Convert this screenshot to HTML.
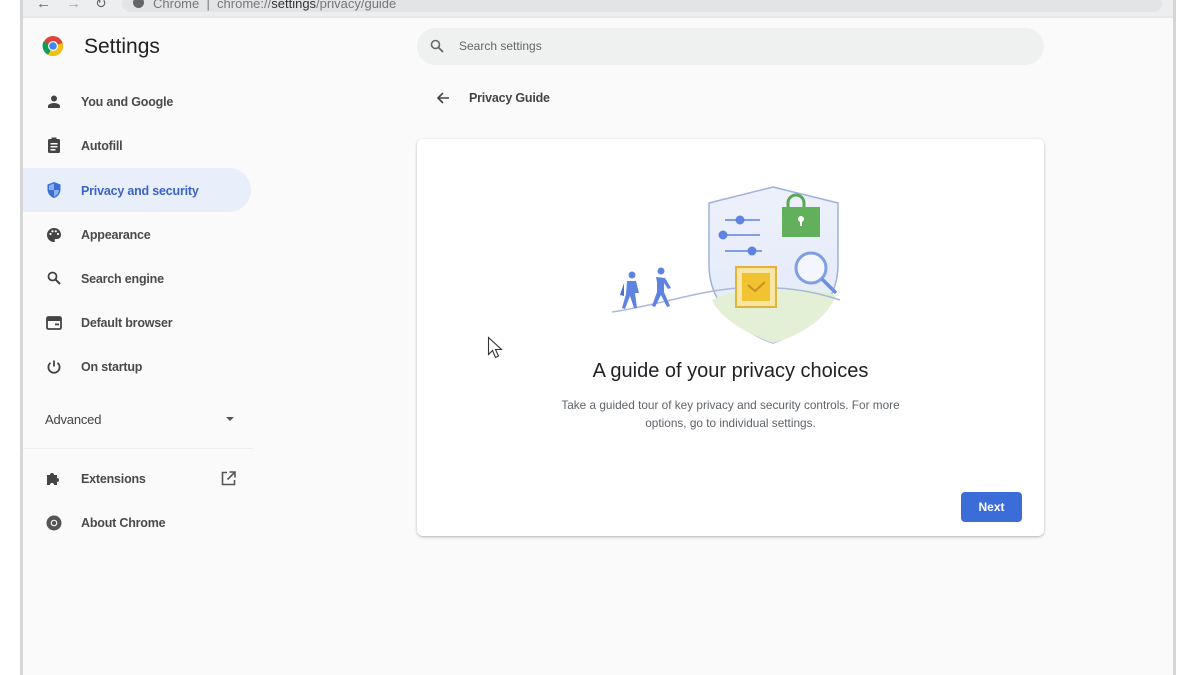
<!DOCTYPE html>
<html><head><meta charset="utf-8"><style>
*{margin:0;padding:0;box-sizing:border-box}
body{width:1200px;height:675px;background:#fff;position:relative;overflow:hidden;font-family:"Liberation Sans",Arial,sans-serif;color:#3c4043}
.frame{position:absolute;left:20px;top:0;width:1156px;height:675px;background:#fafafa;border-left:3px solid #d6d6d6;border-right:3px solid #d6d6d6}
.top{position:absolute;left:23px;top:0;width:1150px;height:18px;background:#eceeef;border-bottom:2px solid #e6e6e6}
.a{position:absolute;white-space:nowrap}
.nav{font-size:12.5px;color:#4a4a4a;font-weight:bold;letter-spacing:-0.2px}
.ic{position:absolute}
</style></head><body>
<div class="frame"></div>
<div class="top"></div>
<div class="a" style="left:36px;top:-5px;font-size:15px;color:#666">←</div>
<div class="a" style="left:66px;top:-5px;font-size:15px;color:#aaa">→</div>
<div class="a" style="left:95px;top:-5px;font-size:14px;color:#666">↻</div>
<div class="a" style="left:122px;top:-4px;width:1040px;height:16px;background:#e2e4e5;border-radius:8px"></div>
<div class="a" style="left:133px;top:-3px;width:11px;height:11px;border-radius:50%;background:#666"></div>
<div class="a" style="left:153px;top:-4px;font-size:13px;color:#777">Chrome&nbsp; | &nbsp;chrome://<b style="color:#333;font-weight:normal">settings</b>/privacy/guide</div>

<svg class="ic" style="left:42px;top:35px" width="22" height="22" viewBox="0 0 22 22"><circle cx="11" cy="11" r="10" fill="#db4437"/><path d="M11 11 L20.5 8 A10 10 0 0 1 6 19.7Z" fill="#f4c20d"/><path d="M11 11 L6 19.7 A10 10 0 0 1 1.5 6.5Z" fill="#0f9d58"/><circle cx="11" cy="11" r="5" fill="#fff"/><circle cx="11" cy="11" r="3.8" fill="#4285f4"/></svg>
<div class="a" style="left:84px;top:35px;font-size:21px;color:#202124">Settings</div>

<div class="a" style="left:417px;top:28px;width:627px;height:37px;background:#eff1f1;border-radius:19px"></div>
<svg class="ic" style="left:430px;top:39px" width="14" height="14" viewBox="0 0 14 14"><circle cx="5.5" cy="5.5" r="4" fill="none" stroke="#666" stroke-width="1.6"/><path d="M8.5 8.5L13 13" stroke="#666" stroke-width="1.8"/></svg>
<div class="a" style="left:459px;top:39px;font-size:12px;color:#666">Search settings</div>

<div class="a" style="left:23px;top:168px;width:228px;height:44px;background:#e8eefa;border-radius:0 22px 22px 0"></div>

<svg class="ic" style="left:46px;top:94px" width="16" height="16" viewBox="0 0 16 16"><circle cx="8" cy="4.5" r="3" fill="#444"/><path d="M2 14v-2c0-2 4-3 6-3s6 1 6 3v2z" fill="#444"/></svg>
<div class="a nav" style="left:81px;top:95px">You and Google</div>
<svg class="ic" style="left:47px;top:137px" width="14" height="17" viewBox="0 0 14 17"><rect x="1" y="2" width="12" height="14" rx="1.5" fill="#444"/><rect x="4.5" y="0.5" width="5" height="3" fill="#444"/><rect x="3.5" y="6" width="7" height="1.5" fill="#fff"/><rect x="3.5" y="9" width="7" height="1.5" fill="#fff"/><rect x="3.5" y="12" width="5" height="1.5" fill="#fff"/></svg>
<div class="a nav" style="left:81px;top:139px">Autofill</div>
<svg class="ic" style="left:46px;top:181px" width="16" height="18" viewBox="0 0 16 18"><path d="M8 1L1.5 3.5v5C1.5 12.5 4.5 16 8 17c3.5-1 6.5-4.5 6.5-8.5v-5z" fill="#3b6fd8"/><path d="M8 2.5v6.5H3V4.5zM8 9h5c-.3 3-2.4 5.6-5 6.5z" fill="#8fb0ee"/></svg>
<div class="a nav" style="left:81px;top:184px;color:#3b63c9">Privacy and security</div>
<svg class="ic" style="left:46px;top:227px" width="16" height="16" viewBox="0 0 16 16"><path d="M8 1a7 7 0 0 0 0 14c1 0 1.3-.8.8-1.5-.5-.7 0-1.5.9-1.5H11a4 4 0 0 0 4-4C15 4 12 1 8 1z" fill="#444"/><circle cx="4.5" cy="7" r="1.1" fill="#fafafa"/><circle cx="6.5" cy="4.3" r="1.1" fill="#fafafa"/><circle cx="9.8" cy="4.3" r="1.1" fill="#fafafa"/><circle cx="12" cy="7" r="1.1" fill="#fafafa"/></svg>
<div class="a nav" style="left:81px;top:228px">Appearance</div>
<svg class="ic" style="left:47px;top:271px" width="14" height="14" viewBox="0 0 14 14"><circle cx="5.5" cy="5.5" r="4" fill="none" stroke="#444" stroke-width="1.8"/><path d="M8.5 8.5L13 13" stroke="#444" stroke-width="2"/></svg>
<div class="a nav" style="left:81px;top:272px">Search engine</div>
<svg class="ic" style="left:46px;top:316px" width="16" height="14" viewBox="0 0 16 14"><rect x="1" y="1" width="14" height="12" rx="1.5" fill="none" stroke="#444" stroke-width="1.8"/><rect x="1" y="1" width="14" height="4" fill="#444"/><rect x="9" y="7.5" width="4" height="1.8" fill="#444"/></svg>
<div class="a nav" style="left:81px;top:316px">Default browser</div>
<svg class="ic" style="left:46px;top:359px" width="16" height="16" viewBox="0 0 16 16"><path d="M8 1.5v6" stroke="#444" stroke-width="1.8"/><path d="M4.5 3.8a5.6 5.6 0 1 0 7 0" fill="none" stroke="#444" stroke-width="1.8"/></svg>
<div class="a nav" style="left:81px;top:360px">On startup</div>

<div class="a nav" style="left:45px;top:412px;font-weight:normal;color:#444;font-size:13px">Advanced</div>
<div class="a" style="left:226px;top:417px;width:0;height:0;border-left:4px solid transparent;border-right:4px solid transparent;border-top:4px solid #555"></div>
<div class="a" style="left:23px;top:448px;width:230px;height:1px;background:#eceeef"></div>

<svg class="ic" style="left:46px;top:470px" width="16" height="16" viewBox="0 0 16 16"><path d="M1 5h3a2 2 0 1 1 4 0h3v3a2 2 0 1 1 0 4v3H8a2 2 0 1 0-4 0H1z" fill="#444"/></svg>
<div class="a nav" style="left:81px;top:472px">Extensions</div>
<svg class="ic" style="left:221px;top:471px" width="15" height="15" viewBox="0 0 15 15"><path d="M6 1.5H1.5v12h12V9" fill="none" stroke="#555" stroke-width="1.6"/><path d="M8.5 1H14v5.5M14 1L6.5 8.5" fill="none" stroke="#555" stroke-width="1.6"/></svg>
<svg class="ic" style="left:46px;top:515px" width="16" height="16" viewBox="0 0 16 16"><circle cx="8" cy="8" r="7.5" fill="#555"/><circle cx="8" cy="8" r="3.3" fill="#fafafa"/><circle cx="8" cy="8" r="2.2" fill="#555"/></svg>
<div class="a nav" style="left:81px;top:516px">About Chrome</div>

<svg class="ic" style="left:436px;top:91px" width="14" height="14" viewBox="0 0 14 14"><path d="M13 7H2M7 2L2 7l5 5" fill="none" stroke="#444" stroke-width="1.6"/></svg>
<div class="a" style="left:469px;top:91px;font-size:12.5px;color:#444;font-weight:bold;letter-spacing:-0.2px">Privacy Guide</div>

<div class="a" style="left:417px;top:139px;width:627px;height:397px;background:#fff;border-radius:6px;box-shadow:0 1px 3px rgba(0,0,0,.22),0 1px 1px rgba(0,0,0,.08)"></div>

<svg class="ic" style="left:600px;top:180px" width="250" height="170" viewBox="600 180 250 170">
<defs><linearGradient id="g" x1="0" y1="0" x2="0" y2="1"><stop offset="0" stop-color="#eef1fb"/><stop offset="0.6" stop-color="#e6ecfa"/><stop offset="1" stop-color="#eef6e6"/></linearGradient></defs>
<path d="M773 187 L838 203 L838 265 C838 305 805 332 773 343 C741 332 709 305 709 265 L709 203Z" fill="url(#g)" stroke="#9fb1dc" stroke-width="1.5"/>
<path d="M712 300 C740 285 800 285 836 295 C828 318 800 336 773 343 C745 333 720 318 712 300Z" fill="#e3f0d6"/>
<path d="M612 312 C660 305 700 290 740 288 C780 286 810 290 840 300" fill="none" stroke="#aab8dd" stroke-width="1.5"/>
<g stroke="#7f9fe4" stroke-width="2"><path d="M725 220H760M722 235H760M725 251H762"/></g>
<circle cx="740" cy="220" r="4.5" fill="#5f84e0"/><circle cx="723" cy="235" r="4.5" fill="#5f84e0"/><circle cx="752" cy="251" r="4.5" fill="#5f84e0"/>
<path d="M788 208 v-5 a8 8 0 0 1 16 0 v5" fill="none" stroke="#5aa857" stroke-width="3"/>
<rect x="782" y="207" width="38" height="30" fill="#63b05c"/>
<circle cx="801" cy="219" r="3" fill="#fff"/><rect x="800" y="220" width="2" height="6" fill="#fff"/>
<circle cx="811" cy="268" r="15" fill="#f4f6fd" stroke="#7f9fe4" stroke-width="3"/>
<path d="M822 279L836 293" stroke="#6d8fe0" stroke-width="3.5"/>
<rect x="736" y="267" width="40" height="40" fill="#f8e7a4" stroke="#e0b43a" stroke-width="2"/>
<rect x="742" y="273" width="28" height="28" fill="#f1c232"/>
<path d="M748 285l7 6 10-9" fill="none" stroke="#c9901e" stroke-width="2"/>
<g fill="#5f84e0"><circle cx="632" cy="275" r="3.5"/><path d="M627 281l9 0 3 12-4 0 2 15-3 0-4-12-5 13-3-1 4-14z"/><circle cx="661" cy="271" r="3.5"/><path d="M656 277l9 1 6 10-3 1-4-6 0 9 6 14-3 1-6-12-6 12-3-1 5-14 0-10z"/></g>
<path d="M624 283l-4 12 4 1z" fill="#4a6ed6"/>
</svg>

<svg class="ic" style="left:487px;top:336px" width="16" height="24" viewBox="0 0 16 24"><path d="M1.5 1.5v17l4-4 3 7 3-1.5-3-6.5h6z" fill="#fff" stroke="#333" stroke-width="1.1"/></svg>

<div class="a" style="left:417px;width:627px;top:360px;text-align:center;font-size:20px;color:#202124">A guide of your privacy choices</div>
<div class="a" style="left:417px;width:627px;top:396px;text-align:center;font-size:11.8px;line-height:18px;color:#5f6368;white-space:normal;padding:0 130px">Take a guided tour of key privacy and security controls. For more options, go to individual settings.</div>
<div class="a" style="left:961px;top:492px;width:61px;height:30px;background:#3b6cd8;border-radius:4px;color:#fff;font-size:12px;font-weight:bold;text-align:center;line-height:30px">Next</div>
</body></html>
